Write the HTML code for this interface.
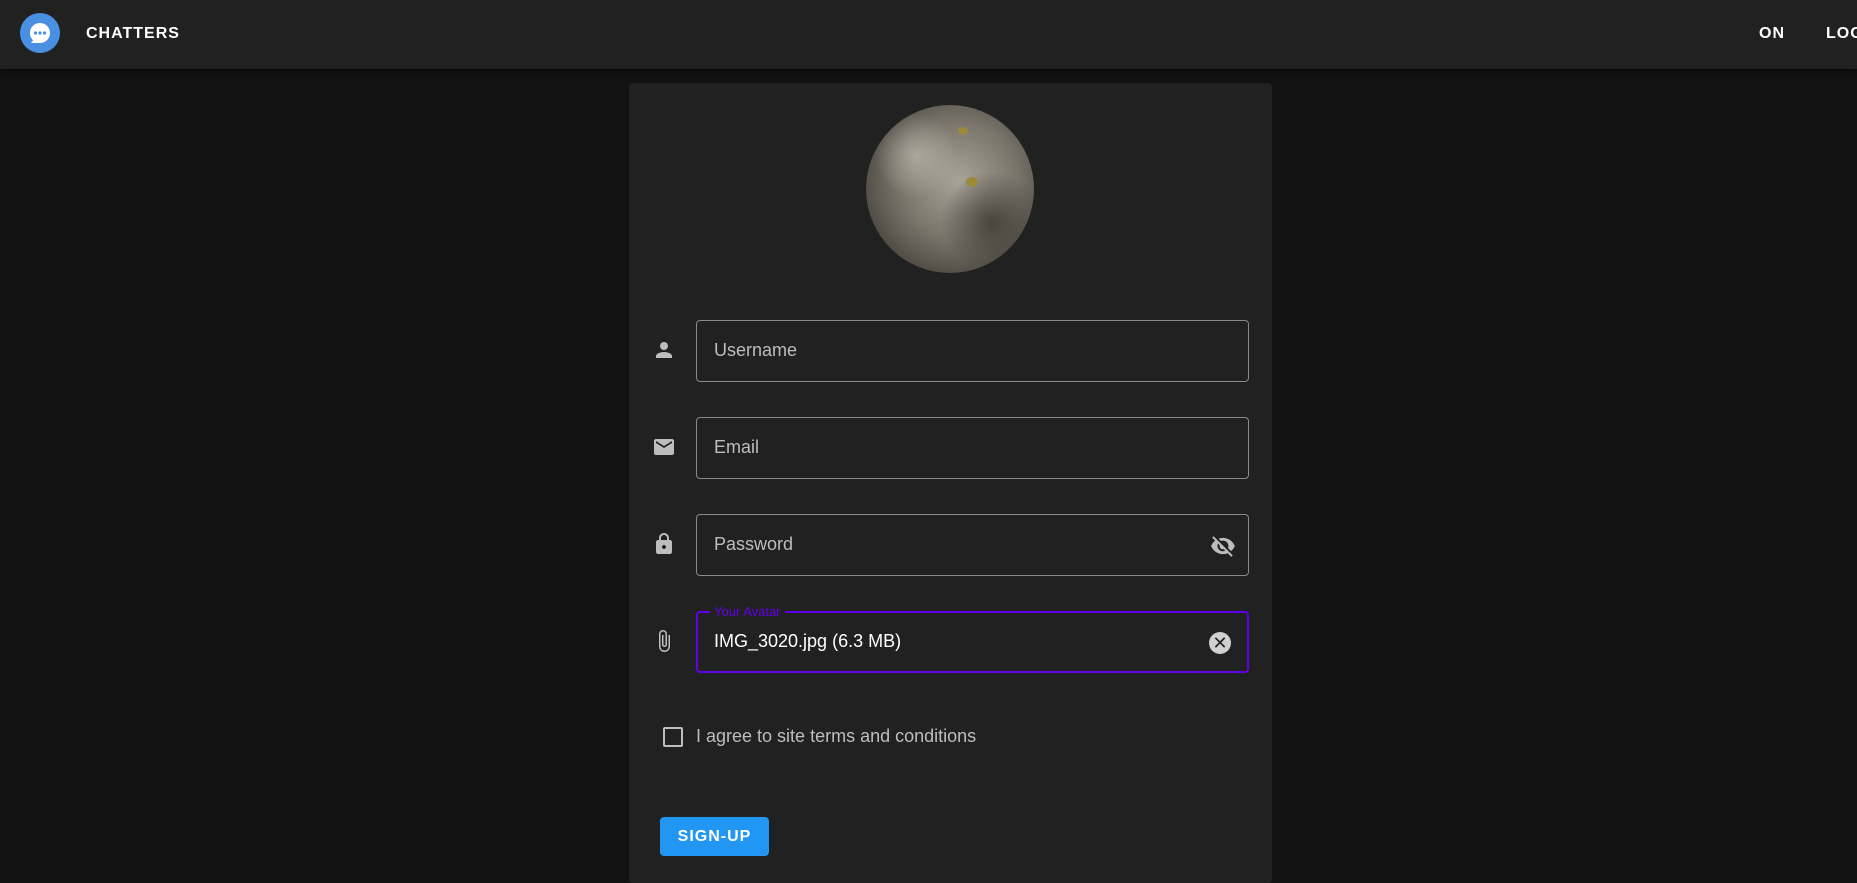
<!DOCTYPE html>
<html><head><style>
*{box-sizing:border-box;margin:0;padding:0}
body{width:1857px;height:867px;background:#121212;font-family:"Liberation Sans",sans-serif;overflow:hidden;position:relative;color:#fff}
.hdr{position:absolute;left:0;top:0;width:1857px;height:69px;background:#212121;box-shadow:0 2px 4px rgba(0,0,0,.5)}
.logo{position:absolute;left:20px;top:13px;width:40px;height:40px;border-radius:50%;background:#4a90e2}
.nav{position:absolute;top:25px;font-weight:bold;font-size:16px;letter-spacing:1px}
.card{position:absolute;left:629px;top:83px;width:643px;height:800px;background:#212121;border-radius:4px}
.av{position:absolute;left:866px;top:105px;width:168px;height:168px;border-radius:50%;background:radial-gradient(circle at 30% 30%,rgba(200,195,185,.6) 0,transparent 25%),radial-gradient(circle at 75% 70%,rgba(60,55,48,.8) 0,transparent 30%),radial-gradient(circle at 55% 45%,#a9a49a 0%,#7a746b 45%,#4e4a43 75%,#a8a295 100%)}
.f{position:absolute;left:696px;width:553px;height:62px;border:1px solid #8a8a8a;border-radius:4px}
.f span{position:absolute;left:17px;top:19px;font-size:18px;color:#bdbdbd}
.ic{position:absolute;left:652px;width:24px;height:24px}
</style></head><body>
<div class="hdr">
<div class="logo"><svg width="40" height="40" viewBox="0 0 40 40"><path d="M20 10a10 10 0 1 0 0 20h-9l2.5-3A10 10 0 0 1 20 10z" fill="#fff"/><circle cx="20" cy="20" r="10" fill="#fff"/><circle cx="15.5" cy="20" r="1.6" fill="#4a90e2"/><circle cx="20" cy="20" r="1.6" fill="#4a90e2"/><circle cx="24.5" cy="20" r="1.6" fill="#4a90e2"/></svg></div>
<div class="nav" style="left:86px">CHATTERS</div>
<div class="nav" style="left:1759px">ON</div>
<div class="nav" style="left:1826px">LOG</div>
</div>
<div class="card"></div>
<div class="av"><div style="position:absolute;left:92px;top:22px;width:10px;height:8px;border-radius:50%;background:#9a8a3a"></div><div style="position:absolute;left:100px;top:72px;width:12px;height:10px;border-radius:50%;background:#9a8a3a"></div></div>
<svg class="ic" style="top:338px" viewBox="0 0 24 24"><path fill="#bdbdbd" d="M12 12c2.2 0 4-1.8 4-4s-1.8-4-4-4-4 1.8-4 4 1.8 4 4 4zm0 2c-2.7 0-8 1.3-8 4v2h16v-2c0-2.7-5.3-4-8-4z"/></svg>
<div class="f" style="top:320px"><span>Username</span></div>
<svg class="ic" style="top:435px" viewBox="0 0 24 24"><path fill="#bdbdbd" d="M20 4H4c-1.1 0-2 .9-2 2v12c0 1.1.9 2 2 2h16c1.1 0 2-.9 2-2V6c0-1.1-.9-2-2-2zm0 4l-8 5-8-5V6l8 5 8-5v2z"/></svg>
<div class="f" style="top:417px"><span>Email</span></div>
<svg class="ic" style="top:532px" viewBox="0 0 24 24"><path fill="#bdbdbd" d="M18 8h-1V6c0-2.8-2.2-5-5-5S7 3.2 7 6v2H6c-1.1 0-2 .9-2 2v10c0 1.1.9 2 2 2h12c1.1 0 2-.9 2-2V10c0-1.1-.9-2-2-2zm-6 9c-1.1 0-2-.9-2-2s.9-2 2-2 2 .9 2 2-.9 2-2 2zM9 8V6c0-1.7 1.3-3 3-3s3 1.3 3 3v2H9z"/></svg>
<div class="f" style="top:514px"><span>Password</span>
<svg style="position:absolute;right:12px;top:18px" width="26" height="26" viewBox="0 0 24 24"><path fill="#bdbdbd" d="M12 7c2.8 0 5 2.2 5 5 0 .6-.1 1.3-.4 1.8l2.9 2.9c1.5-1.3 2.700-2.900 3.4-4.7-1.7-4.4-6-7.5-11-7.5-1.4 0-2.7.3-4 .7l2.2 2.2c.6-.3 1.2-.4 1.9-.4zM2 4.3l2.3 2.3.5.4C3.1 8.3 1.8 10 1 12c1.7 4.4 6 7.5 11 7.5 1.6 0 3-.3 4.4-.8l.4.4 2.9 2.9 1.3-1.3L3.3 3 2 4.3zM7.5 9.8l1.5 1.5c0 .2-.1.5-.1.7 0 1.700 1.3 3 3 3 .2 0 .4 0 .7-.1l1.5 1.5c-.7.3-1.4.5-2.2.5-2.8 0-5-2.2-5-5 0-.8.2-1.5.5-2.2z"/></svg></div>
<svg class="ic" style="top:629px" viewBox="0 0 24 24"><path fill="#bdbdbd" d="M16.5 6v11.5c0 2.2-1.8 4-4 4s-4-1.8-4-4V5c0-1.4 1.1-2.5 2.5-2.5s2.5 1.1 2.5 2.5v10.5c0 .6-.4 1-1 1s-1-.4-1-1V6H10v9.5c0 1.4 1.1 2.5 2.5 2.5s2.5-1.1 2.5-2.5V5c0-2.2-1.8-4-4-4S7 2.8 7 5v12.5c0 3 2.5 5.5 5.5 5.5s5.5-2.5 5.5-5.5V6h-1.5z"/></svg>
<div class="f" style="top:611px;border:2px solid #6200ea"><span style="color:#fff;top:18px;left:16px">IMG_3020.jpg (6.3 MB)</span>
<div style="position:absolute;left:12px;top:-9px;background:#212121;padding:0 4px;color:#6200ea;font-size:13px">Your Avatar</div>
<div style="position:absolute;right:16px;top:19px;width:22px;height:22px;border-radius:50%;background:#d0d0d0;color:#212121;font-size:18px;line-height:22px;text-align:center">✕</div></div>
<div style="position:absolute;left:663px;top:727px;width:20px;height:20px;border:2px solid #bdbdbd;border-radius:2px"></div>
<div style="position:absolute;left:696px;top:726px;font-size:18px;color:#bdbdbd">I agree to site terms and conditions</div>
<div style="position:absolute;left:660px;top:817px;width:109px;height:39px;background:#2196f3;border-radius:4px;font-weight:bold;font-size:16px;letter-spacing:1px;text-align:center;line-height:39px">SIGN-UP</div>
</body></html>
